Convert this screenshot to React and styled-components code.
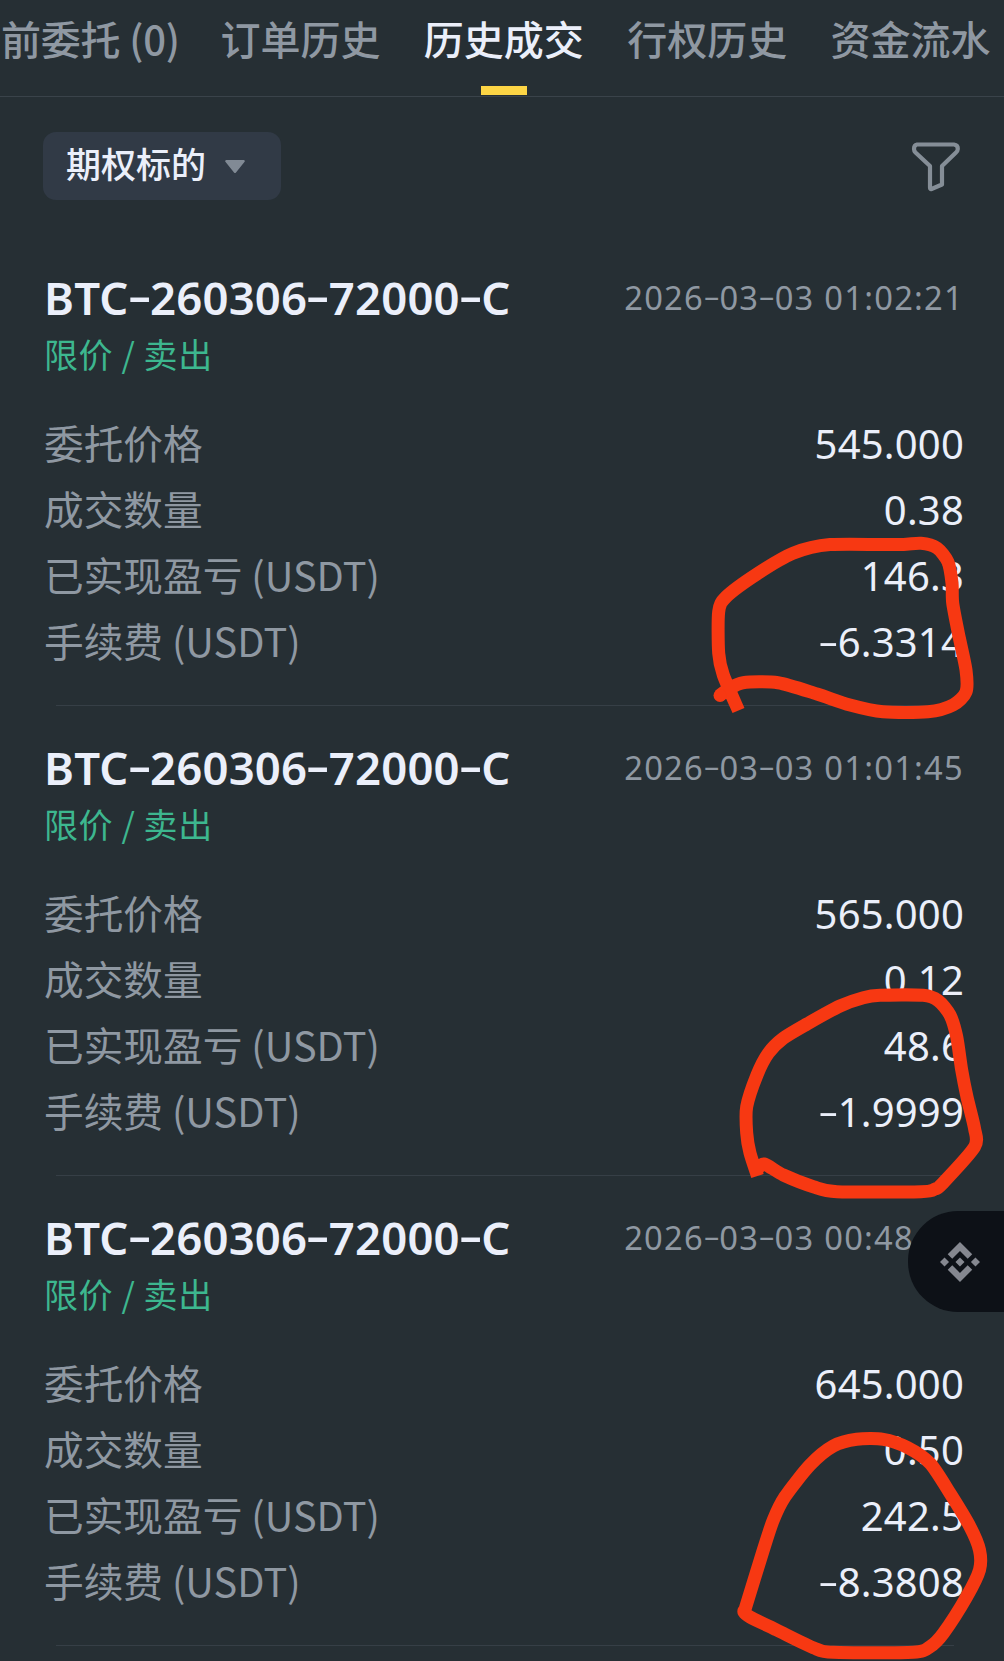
import React from 'react';
import styled, { createGlobalStyle } from 'styled-components';
import { SiBinance } from 'react-icons/si';

const GlobalStyle = createGlobalStyle`
  * {
    box-sizing: border-box;
  }
  body {
    margin: 0;
    background-color: #262f34;
    font-family: 'Noto Sans', 'Noto Sans CJK SC', sans-serif;
  }
`;

const Page = styled.div`
  position: relative;
  width: 1004px;
  height: 1661px;
  overflow: hidden;
  background-color: #262f34;
  color: #ebeffa;
`;

const Tabs = styled.nav`
  display: flex;
  gap: 43.4px;
  height: 97px;
  padding-left: 1px;
  border-bottom: 1px solid #3a434a;
`;

const Tab = styled.div`
  display: flex;
  flex-direction: column;
  align-items: center;
  justify-content: space-between;
  flex-shrink: 0;
  padding-bottom: 1px;
  white-space: nowrap;
  font-family: 'Noto Sans CJK SC', sans-serif;
  font-size: 40px;
  font-weight: 500;
  line-height: 76px;
  color: ${({ active }) => (active ? '#ebeffa' : '#8f98a2')};

  &:first-child {
    align-items: flex-start;
    width: 176px;
    letter-spacing: -0.2px;
  }
`;

const Underline = styled.div`
  width: 46px;
  height: 9px;
  background-color: #fcd545;
`;

const FilterBar = styled.div`
  display: flex;
  justify-content: space-between;
  align-items: center;
  height: 139px;
  padding: 0 43px 1px;
`;

const Select = styled.button`
  display: flex;
  align-items: center;
  gap: 19px;
  width: 238px;
  height: 68px;
  padding: 0 0 7px 23px;
  border: 0;
  border-radius: 13px;
  background-color: #313a46;
  color: #ebeffa;
  font-family: 'Noto Sans CJK SC', sans-serif;
  font-size: 35px;
  font-weight: 500;

  svg {
    margin-top: 8px;
  }
`;

const Trade = styled.section`
  position: relative;
  height: 470px;
  padding: 31px 40px 0 44px;

  &::after {
    content: '';
    position: absolute;
    left: 56px;
    right: 50px;
    bottom: 0;
    height: 1px;
    background-color: #363f46;
  }
`;

const TradeHeader = styled.div`
  display: flex;
  justify-content: space-between;
  height: 60px;
  line-height: 60px;
  white-space: nowrap;
`;

const Symbol = styled.div`
  font-size: 45.5px;
  font-weight: 600;
  letter-spacing: 0.2px;
`;

const Time = styled.div`
  margin-right: ${({ cut }) => (cut ? '50px' : '0')};
  padding-top: 1px;
  font-size: 32.7px;
  letter-spacing: 1.25px;
  color: #8f98a2;
`;

const Side = styled.div`
  margin: 4px 0 33px;
  height: 45px;
  line-height: 45px;
  font-family: 'Noto Sans CJK SC', sans-serif;
  font-size: 34px;
  letter-spacing: 0.6px;
  color: #3db78f;
`;

const Row = styled.div`
  display: flex;
  justify-content: space-between;
  height: 66px;
  line-height: 66px;
  white-space: nowrap;
`;

const Label = styled.div`
  font-family: 'Noto Sans CJK SC', sans-serif;
  font-size: 39.7px;
  color: #8f98a2;
`;

const Value = styled.div`
  padding-top: 2px;
  font-size: 40px;
  letter-spacing: 0.2px;
  color: #ebeffa;
`;

// the hyphen is wider than the default one
const Dash = styled.span`
  display: inline-block;
  width: 0.47em;
  text-align: center;
  letter-spacing: 0;
  transform: translateY(-0.04em) scale(1.6, 0.9);
`;

const FloatButton = styled.button`
  position: absolute;
  top: 1211px;
  right: 0;
  display: flex;
  align-items: center;
  width: 96px;
  height: 101px;
  padding: 0 0 0 32px;
  border: 0;
  border-radius: 50px 0 0 50px;
  background-color: #0d1117;
  color: #858890;
`;

const Marks = styled.svg`
  position: absolute;
  top: 0;
  left: 0;
  pointer-events: none;
`;

const tabs = ['前委托 (0)', '订单历史', '历史成交', '行权历史', '资金流水'];

const trades = [
  { time: '2026-03-03 01:02:21', price: '545.000', amount: '0.38', pnl: '146.3', fee: '-6.3314' },
  { time: '2026-03-03 01:01:45', price: '565.000', amount: '0.12', pnl: '48.6', fee: '-1.9999' },
  { time: '2026-03-03 00:48', price: '645.000', amount: '0.50', pnl: '242.5', fee: '-8.3808' },
];

const marks = [
  [[719, 696], [729, 689], [743, 682.7], [778, 682.7], [817, 694], [850, 705], [883, 711.8], [928, 711.8], [953, 705], [966, 692], [966, 670], [958.3, 633], [952.7, 603], [952, 583], [948, 562], [937, 548], [921, 543.2], [897, 544.6], [830, 544.6], [793, 553.3], [757, 574], [726, 597], [718.7, 611.7], [718.7, 653.3], [723.3, 675], [738.5, 710.5]],
  [[757.5, 1176], [750, 1153], [746.7, 1133], [746.7, 1106.7], [757, 1075], [768.3, 1053.3], [783.3, 1038.3], [807, 1024], [840, 1006], [863.3, 997.7], [880, 995.3], [923.3, 995.3], [938.3, 1000.7], [950, 1015], [956.7, 1036.7], [961.7, 1070], [967, 1097], [974.5, 1128.3], [974.5, 1147], [942, 1184], [935, 1189], [921, 1191.7], [837, 1191.7], [813.3, 1186.7], [783.3, 1175], [764, 1164], [757, 1170]],
  [[744, 1612.7], [763.3, 1550], [773.3, 1520], [785, 1496.7], [810, 1465], [833.3, 1446], [856.7, 1439.3], [883.3, 1439.3], [907, 1447.3], [930, 1463.3], [950, 1493.3], [970, 1526.7], [979.5, 1550], [979.5, 1570], [966.7, 1596.7], [943.3, 1633.3], [930, 1646.7], [913.3, 1652.3], [833.3, 1652.3], [813.3, 1647.7], [776.7, 1630], [750, 1617], [744, 1612], [745, 1609]],
];

// smooth line through all the points
const toPath = (points) =>
  points.reduce((d, [x, y], i) => {
    if (i === 0) return `M${x} ${y}`;
    const [px, py] = points[i - 1];
    const [bx, by] = points[i - 2] || points[i - 1];
    const [nx, ny] = points[i + 1] || points[i];
    const k = 0.13;
    return `${d} C${px + (x - bx) * k} ${py + (y - by) * k} ${x - (nx - px) * k} ${y - (ny - py) * k} ${x} ${y}`;
  }, '');

const Dashed = ({ text }) =>
  text.split('-').map((part, i) => (
    <React.Fragment key={i}>
      {i > 0 && <Dash>-</Dash>}
      {part}
    </React.Fragment>
  ));

const TradeItem = ({ time, price, amount, pnl, fee, cut }) => (
  <Trade>
    <TradeHeader>
      <Symbol><Dashed text="BTC-260306-72000-C" /></Symbol>
      <Time cut={cut ? 1 : undefined}><Dashed text={time} /></Time>
    </TradeHeader>
    <Side>限价 / 卖出</Side>
    <Row><Label>委托价格</Label><Value>{price}</Value></Row>
    <Row><Label>成交数量</Label><Value>{amount}</Value></Row>
    <Row><Label>已实现盈亏 (USDT)</Label><Value>{pnl}</Value></Row>
    <Row><Label>手续费 (USDT)</Label><Value><Dashed text={fee} /></Value></Row>
  </Trade>
);

export default function App() {
  return (
    <Page>
      <GlobalStyle />
      <Tabs>
        {tabs.map((name, i) => (
          <Tab key={name} active={i === 2 ? 1 : undefined}>
            {name}
            {i === 2 && <Underline />}
          </Tab>
        ))}
      </Tabs>
      <FilterBar>
        <Select>
          期权标的
          <svg width="20" height="14" viewBox="0 0 20 14">
            <path d="M1.2 0H18.8Q20.6 0.6 19.4 2L11 12.4Q10 13.6 9 12.4L0.6 2Q-0.6 0.6 1.2 0Z" fill="#818a95" />
          </svg>
        </Select>
        <svg width="50" height="52" viewBox="0 0 50 52" fill="none" stroke="#858e97" strokeWidth="4.2" strokeLinejoin="round">
          <path d="M6 4.5H43Q47 5 46.8 9Q46.7 11 45 12.5L31 26V44.5L20.5 49Q19 49.5 19 47.5V26L4.5 12.5Q3 11 3 9Q3 5 6 4.5Z" />
        </svg>
      </FilterBar>
      {trades.map((trade, i) => (
        <TradeItem key={trade.time} cut={i === 2} {...trade} />
      ))}
      <Marks width="1004" height="1661" fill="none" stroke="#f73812" strokeWidth="13" strokeLinejoin="round">
        {marks.map((points, i) => (
          <path key={i} d={toPath(points)} />
        ))}
        <circle cx="720" cy="695.5" r="6.5" fill="#f73812" stroke="none" />
      </Marks>
      <FloatButton>
        <SiBinance size={40} />
      </FloatButton>
    </Page>
  );
}
